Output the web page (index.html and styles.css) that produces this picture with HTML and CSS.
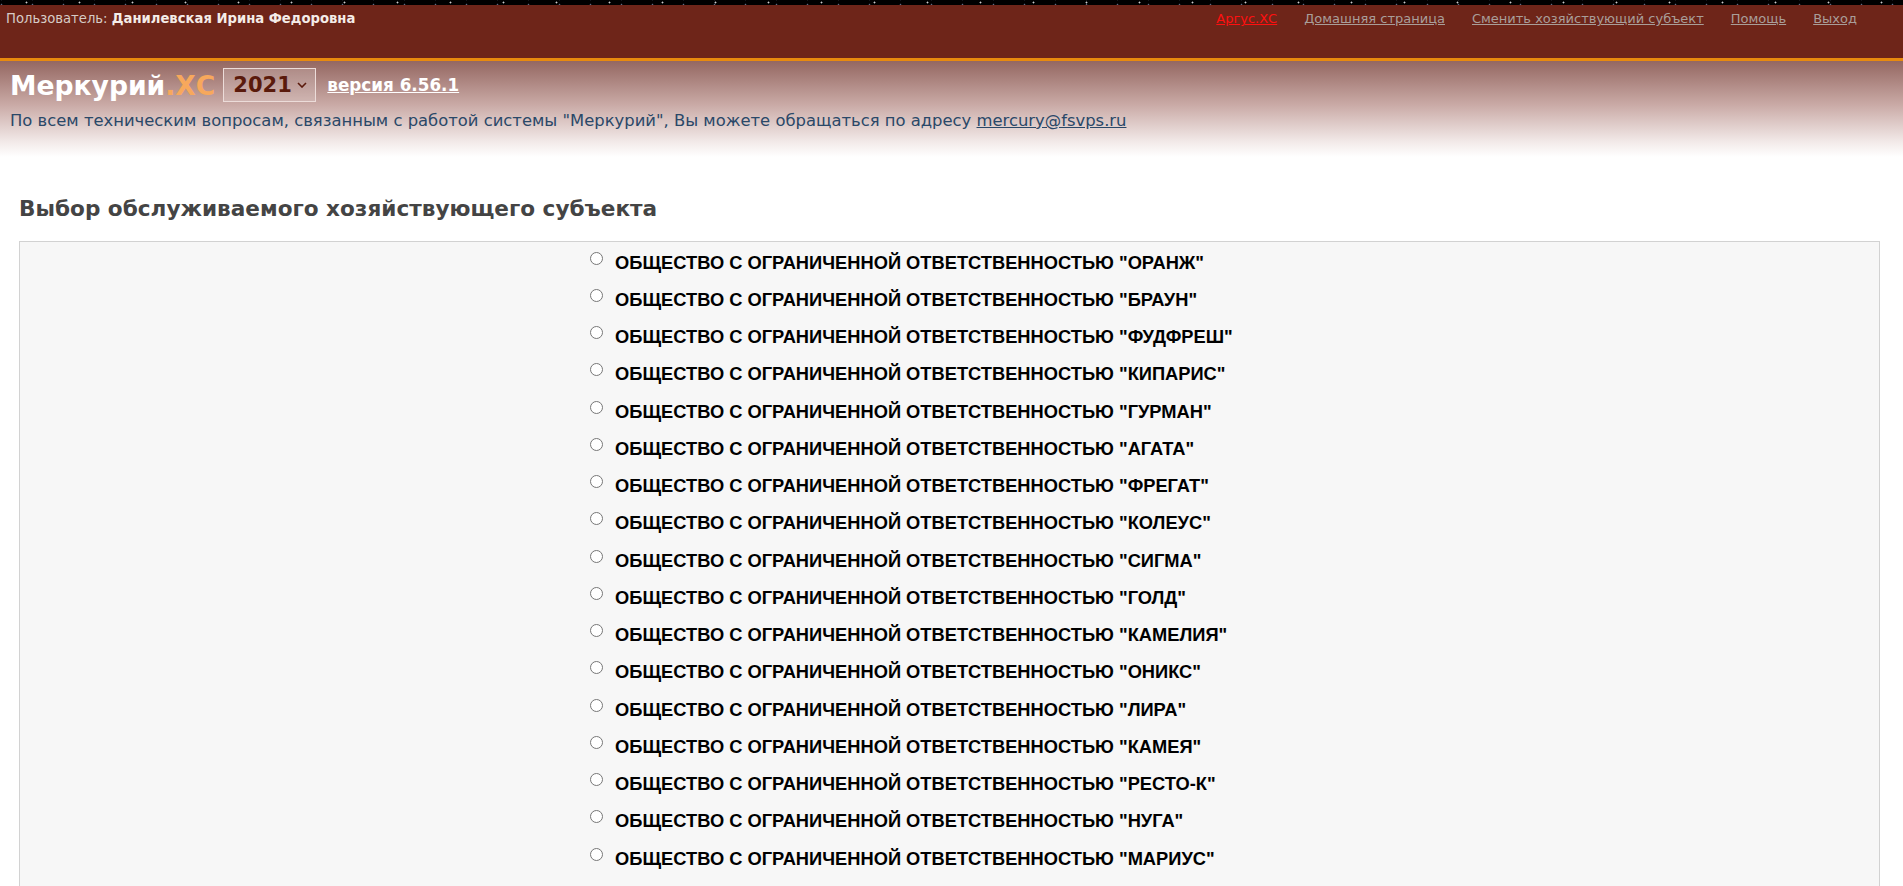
FILE: index.html
```html
<!DOCTYPE html>
<html lang="ru">
<head>
  <meta charset="UTF-8">
  <title>Меркурий.ХС</title>
  <link rel="stylesheet" href="styles.css">
</head>
<body>
  <div class="stars"></div>
  <header class="userbar">
    <div class="user">Пользователь: <b>Данилевская Ирина Федоровна</b></div>
    <nav class="links">
      <a href="#" class="argus">Аргус.ХС</a>
      <a href="#">Домашняя страница</a>
      <a href="#">Сменить хозяйствующий субъект</a>
      <a href="#">Помощь</a>
      <a href="#">Выход</a>
    </nav>
  </header>

  <div class="brand">
    <div class="brand-row">
      <span class="logo">Меркурий<span class="xc">.ХС</span></span>
      <div class="year">2021
        <svg width="10" height="6" viewBox="0 0 10 6"><path d="M1 1l4 4 4-4" fill="none" stroke="#5a1a0c" stroke-width="1.6"/></svg>
      </div>
      <a href="#" class="version">версия 6.56.1</a>
    </div>
    <p class="info">По всем техническим вопросам, связанным с работой системы "Меркурий", Вы можете обращаться по адресу <a href="#">mercury@fsvps.ru</a></p>
  </div>

  <main class="content">
    <h2>Выбор обслуживаемого хозяйствующего субъекта</h2>
    <div class="box">
      <ul class="firms">
        <li><label><input type="radio" name="firm"> ОБЩЕСТВО С ОГРАНИЧЕННОЙ ОТВЕТСТВЕННОСТЬЮ "ОРАНЖ"</label></li>
        <li><label><input type="radio" name="firm"> ОБЩЕСТВО С ОГРАНИЧЕННОЙ ОТВЕТСТВЕННОСТЬЮ "БРАУН"</label></li>
        <li><label><input type="radio" name="firm"> ОБЩЕСТВО С ОГРАНИЧЕННОЙ ОТВЕТСТВЕННОСТЬЮ "ФУДФРЕШ"</label></li>
        <li><label><input type="radio" name="firm"> ОБЩЕСТВО С ОГРАНИЧЕННОЙ ОТВЕТСТВЕННОСТЬЮ "КИПАРИС"</label></li>
        <li><label><input type="radio" name="firm"> ОБЩЕСТВО С ОГРАНИЧЕННОЙ ОТВЕТСТВЕННОСТЬЮ "ГУРМАН"</label></li>
        <li><label><input type="radio" name="firm"> ОБЩЕСТВО С ОГРАНИЧЕННОЙ ОТВЕТСТВЕННОСТЬЮ "АГАТА"</label></li>
        <li><label><input type="radio" name="firm"> ОБЩЕСТВО С ОГРАНИЧЕННОЙ ОТВЕТСТВЕННОСТЬЮ "ФРЕГАТ"</label></li>
        <li><label><input type="radio" name="firm"> ОБЩЕСТВО С ОГРАНИЧЕННОЙ ОТВЕТСТВЕННОСТЬЮ "КОЛЕУС"</label></li>
        <li><label><input type="radio" name="firm"> ОБЩЕСТВО С ОГРАНИЧЕННОЙ ОТВЕТСТВЕННОСТЬЮ "СИГМА"</label></li>
        <li><label><input type="radio" name="firm"> ОБЩЕСТВО С ОГРАНИЧЕННОЙ ОТВЕТСТВЕННОСТЬЮ "ГОЛД"</label></li>
        <li><label><input type="radio" name="firm"> ОБЩЕСТВО С ОГРАНИЧЕННОЙ ОТВЕТСТВЕННОСТЬЮ "КАМЕЛИЯ"</label></li>
        <li><label><input type="radio" name="firm"> ОБЩЕСТВО С ОГРАНИЧЕННОЙ ОТВЕТСТВЕННОСТЬЮ "ОНИКС"</label></li>
        <li><label><input type="radio" name="firm"> ОБЩЕСТВО С ОГРАНИЧЕННОЙ ОТВЕТСТВЕННОСТЬЮ "ЛИРА"</label></li>
        <li><label><input type="radio" name="firm"> ОБЩЕСТВО С ОГРАНИЧЕННОЙ ОТВЕТСТВЕННОСТЬЮ "КАМЕЯ"</label></li>
        <li><label><input type="radio" name="firm"> ОБЩЕСТВО С ОГРАНИЧЕННОЙ ОТВЕТСТВЕННОСТЬЮ "РЕСТО-К"</label></li>
        <li><label><input type="radio" name="firm"> ОБЩЕСТВО С ОГРАНИЧЕННОЙ ОТВЕТСТВЕННОСТЬЮ "НУГА"</label></li>
        <li><label><input type="radio" name="firm"> ОБЩЕСТВО С ОГРАНИЧЕННОЙ ОТВЕТСТВЕННОСТЬЮ "МАРИУС"</label></li>
      </ul>
    </div>
  </main>
</body>
</html>
```

FILE: styles.css
```css
body {
  margin: 0;
  padding: 0;
  font-family: "DejaVu Sans", Verdana, sans-serif;
  background: #fff;
  color: #333;
}
::-webkit-scrollbar { width: 4px; }
::-webkit-scrollbar-track { background: #fff; }
::-webkit-scrollbar-thumb { background: #c4c4c4; }

.stars { /* полоска сверху */
  height: 5px;
  background-color: #000;
  background-image: radial-gradient(circle, rgba(255,255,255,.8) 0.7px, transparent 1.2px),
    radial-gradient(circle, rgba(160,180,220,.6) 0.6px, transparent 1.1px);
  background-size: 53px 5px, 31px 5px;
  background-position: 0 0, 17px 2px;
}
.userbar {
  height: 56px;
  background: #6e2519;
  border-bottom: 3px solid #e88a0e;
  display: flex;
  justify-content: space-between;
  align-items: flex-start;
  padding: 6px 46px 0 6px;
  box-sizing: border-box;
  font-size: 13.2px;
  color: #d6cbc6;
}
.user b {
  color: #f4ece8;
}
.links {
  display: flex;
  gap: 27px;
}
.links a {
  font-size: 13px;
  color: #a99e99;
}
.links a.argus {
  color: #ff1010;
}

.brand { /* шапка с градиентом */
  height: 96px;
  padding: 6px 0 0 10px;
  box-sizing: border-box;
  background: linear-gradient(#946761, #c9a9a5 45%, #f3ebea 85%, #fff);
}
.brand-row {
  display: flex;
  align-items: center;
  height: 36px;
}
.logo {
  font-size: 26.6px;
  font-weight: bold;
  color: #fff;
}
.logo .xc {
  color: #f7a85c;
}
.year {
  margin-left: 8px;
  width: 93px;
  height: 34px;
  box-sizing: border-box;
  border: 1px solid #ecdcd9;
  background: rgba(255,255,255,.18);
  display: flex;
  align-items: center;
  justify-content: space-between;
  padding: 0 8px 0 9px;
  font-size: 21px;
  font-weight: bold;
  color: #5a1a0c;
}
.version {
  margin-left: 11px;
  font-size: 16.8px;
  font-weight: bold;
  color: #fff;
}
.info {
  margin: 8px 0 0 0;
  font-size: 16.4px;
  color: #2a4868;
}
.info a {
  color: #2a4868;
}

.content {
  padding: 0 23px 0 19px;
}
.content h2 {
  margin: 39px 0 20px 0;
  font-size: 21.6px;
  color: #444;
}
.box {
  border: 1px solid #d2d2d2;
  background: #f7f7f7;
  height: 700px;
}
.firms {
  list-style: none;
  margin: 0;
  padding: 2px 0 0 570px;
}
.firms li {
  height: 37.25px;
  display: flex;
  align-items: center;
}
.firms label {
  font-family: "Liberation Sans", Arial, sans-serif;
  font-size: 18.3px;
  font-weight: bold;
  color: #000;
}
.firms input {
  margin: 0 7px 0 0;
  width: 13px;
  height: 13px;
  vertical-align: 4px;
}
```
